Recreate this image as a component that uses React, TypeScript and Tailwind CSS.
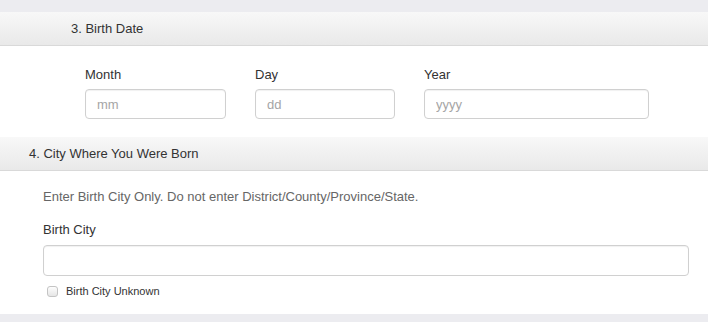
import React from 'react';

const DateField = ({ label, placeholder, width }: { label: string; placeholder: string; width: string }) => (
    <div className={`flex flex-col ${width}`}>
        <label className="text-[13px] leading-[16px] text-[#333] mb-[6px]">{label}</label>
        <input
            type="text"
            placeholder={placeholder}
            className="h-[30px] w-full rounded-[4px] border border-[#d0d0d0] bg-white px-[11px] text-[13px] text-[#555] placeholder:text-[#a5a5a5] shadow-[inset_0_1px_1px_rgba(0,0,0,0.06)] outline-none"
        />
    </div>
);

const SectionHeader = ({ title, indent }: { title: string; indent: string }) => (
    <div className={`flex items-center h-[34px] ${indent} bg-gradient-to-b from-[#f8f8f8] to-[#e9e9e9] border-b border-[#d9d9d9] text-[13px] text-[#333]`}>
        {title}
    </div>
);

export default function App() {
    return (
        <div className="w-[708px] h-[322px] overflow-hidden bg-white" style={{ fontFamily: '"Liberation Sans", Arial, sans-serif' }}>
            <div className="h-[12px] bg-[#ececf0]"></div>
            <SectionHeader title="3. Birth Date" indent="pl-[71px]" />
            <div className="h-[91px] pt-[21px] pl-[85px] flex gap-[29px] bg-white">
                <DateField label="Month" placeholder="mm" width="w-[141px]" />
                <DateField label="Day" placeholder="dd" width="w-[140px]" />
                <DateField label="Year" placeholder="yyyy" width="w-[225px]" />
            </div>
            <SectionHeader title="4. City Where You Were Born" indent="pl-[29px]" />
            <div className="h-[143px] bg-white px-[43px] pr-[19px] pt-[18px]">
                <p className="text-[13px] leading-[16px] text-[#666]">Enter Birth City Only. Do not enter District/County/Province/State.</p>
                <label className="block mt-[17px] mb-[7px] text-[13px] leading-[16px] text-[#333]">Birth City</label>
                <input
                    type="text"
                    className="block h-[31px] w-[646px] rounded-[4px] border border-[#d0d0d0] bg-white px-[11px] text-[13px] shadow-[inset_0_1px_1px_rgba(0,0,0,0.06)] outline-none"
                />
                <div className="flex items-center gap-[8px] mt-[8px] pl-[4px]">
                    <span className="w-[11px] h-[11px] rounded-[3px] border border-[#c4c4c4] bg-gradient-to-b from-[#fdfdfd] to-[#e6e6e6]"></span>
                    <span className="text-[11px] leading-[14px] text-[#333]">Birth City Unknown</span>
                </div>
            </div>
            <div className="h-[8px] bg-[#ececf0]"></div>
        </div>
    );
}
